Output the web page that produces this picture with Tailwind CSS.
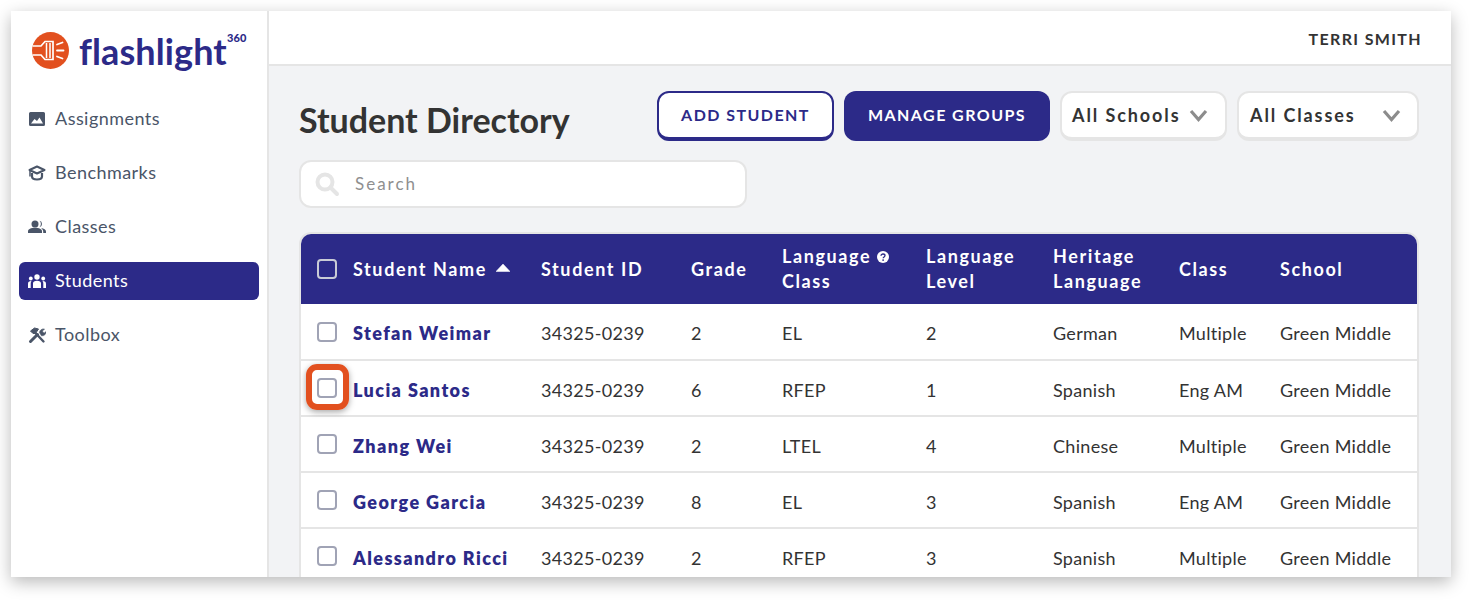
<!DOCTYPE html>
<html lang="en">
<head>
    <meta charset="UTF-8">
    <title>Student Directory</title>
    <script src="https://cdn.jsdelivr.net/npm/@tailwindcss/browser@4"></script>
</head>
<body class="bg-white font-['Lato','Noto_Sans',sans-serif] text-[#333333]">
<div class="p-[11px] h-[602px] overflow-hidden">
    <div class="flex w-[1440px] h-[566px] overflow-hidden bg-white shadow-[0_5px_16px_rgba(0,0,0,0.28)]">

        <!-- sidebar -->
        <aside class="w-[258px] shrink-0 border-r-2 border-[#e5e5e5] px-2">
            <div class="h-[89px] pl-[13px] pt-[21px] flex items-start">
                <svg class="w-[37px] h-[37px] shrink-0" viewBox="0 0 37 37">
                    <circle cx="18.5" cy="18.5" r="18.5" fill="#e2501f"/>
                    <path d="M0.5 14H9L13 9.500H21V27.500H13L9 23H0.5" fill="none" stroke="#fff" stroke-width="1.700"/>
                    <path d="M14.500 11V26M18 11V26" stroke="#fff" stroke-width="1.500"/>
                    <path d="M25 12.500L30.500 10.500M25 18.500H31.500M25 24.500L30.500 26.500" stroke="#fff" stroke-width="1.800" stroke-linecap="round"/>
                </svg>
                <div class="ml-[10px] -mt-[4px] text-[36px] leading-[46px] font-bold tracking-[0.1px] text-[#2c2a88] relative">
                    flashlight<sup class="absolute left-[148px] top-[4px] text-[11px] leading-[11px] font-black">360</sup>
                </div>
            </div>
            <nav class="flex flex-col gap-4 text-[18px] tracking-[0.45px] text-[#4a5568]">
                <a class="h-[38px] rounded-md pl-[9px] flex items-center gap-[9px]">
                    <svg class="w-[18px] h-[18px] shrink-0" viewBox="0 0 18 18"><path fill-rule="evenodd" fill="currentColor" d="M2.5 2h13A1.5 1.5 0 0 1 17 3.5v11a1.5 1.5 0 0 1-1.500 1.500h-13A1.500 1.500 0 0 1 1 14.500v-11A1.500 1.500 0 0 1 2.500 2ZM3 13.500h12L11.500 7.500 9 11 6.500 9Z"/></svg>
                    <span class="pb-[2px]">Assignments</span>
                </a>
                <a class="h-[38px] rounded-md pl-[9px] flex items-center gap-[9px]">
                    <svg class="w-[18px] h-[18px] shrink-0" viewBox="0 0 18 18"><path d="M9 2.500 16.500 6 9 9.500 1.500 6Z" fill="none" stroke="currentColor" stroke-width="2" stroke-linejoin="round"/><path d="M4 9v3.500C4 16.500 14 16.500 14 12.500V9" fill="none" stroke="currentColor" stroke-width="2.200"/><path d="M2 6.500v6" stroke="currentColor" stroke-width="1.500"/></svg>
                    <span class="pb-[2px]">Benchmarks</span>
                </a>
                <a class="h-[38px] rounded-md pl-[9px] flex items-center gap-[9px]">
                    <svg class="w-[18px] h-[18px] shrink-0" viewBox="0 0 18 18" fill="currentColor"><circle cx="7" cy="6" r="3.500"/><path d="M0 15v-1.500C0 11 3 9.800 7 9.800s7 1.200 7 3.700V15Z"/><path d="M11.500 2.800a3.300 3.300 0 0 1 0 6.400 4.800 4.800 0 0 0 0-6.400ZM13 9.900c3 .3 5 1.500 5 3.600V15h-2.800v-1.500c0-1.400-.8-2.600-2.200-3.600Z"/></svg>
                    <span class="pb-[2px]">Classes</span>
                </a>
                <a class="h-[38px] rounded-md pl-[9px] flex items-center gap-[9px] bg-[#2c2a88] text-white">
                    <svg class="w-[18px] h-[18px] shrink-0" viewBox="0 0 18 18" fill="currentColor"><circle cx="9" cy="5" r="2.700"/><circle cx="2.800" cy="6.500" r="1.900"/><circle cx="15.200" cy="6.500" r="1.900"/><path d="M5 16v-4.500C5 9.500 6.500 8.700 9 8.700s4 .8 4 2.800V16ZM0 16v-4c0-2 1-2.900 3.500-2.900-.6.700-.8 1.500-.8 2.400V16ZM18 16v-4c0-2-1-2.900-3.500-2.900.6.700.8 1.500.8 2.400V16Z"/></svg>
                    <span class="pb-[2px]">Students</span>
                </a>
                <a class="h-[38px] rounded-md pl-[9px] flex items-center gap-[9px]">
                    <svg class="w-[18px] h-[18px] shrink-0" viewBox="0 0 18 18" fill="none" stroke="currentColor"><path d="M2.500 15.500 9.500 8.500" stroke-width="3" stroke-linecap="round"/><path d="M15.500 15.500 7 6.500" stroke-width="2.400" stroke-linecap="round"/><path d="M2.500 5 6.500 2 10.500 3 7.500 7.500 5 7.500Z" fill="currentColor" stroke-width="1"/><path d="M11.500 6.500c.3-2.500 2.500-4 5-3.500l-2 2 .5 1.500 1.500.5 1.500-1.500c.3 2.500-1.500 4.500-4.500 4.300Z" fill="currentColor" stroke-width=".6"/></svg>
                    <span class="pb-[2px]">Toolbox</span>
                </a>
            </nav>
        </aside>

        <!-- main -->
        <main class="flex-1 min-w-0 flex flex-col bg-[#f2f3f5]">
            <header class="h-[55px] shrink-0 bg-white border-b-2 border-[#e5e5e5] flex items-center justify-end pr-[29px] pt-[3px] text-[16px] font-bold tracking-[1.35px] text-[#333333]">
                TERRI SMITH
            </header>

            <div class="pl-[30px] pr-[32px] pt-[25px]">
                <div class="flex items-start h-[50px]">
                    <h1 class="text-[34px] leading-[58px] h-[50px] font-bold text-[#333333]">Student Directory</h1>
                    <div class="ml-auto flex gap-[10px] h-[50px] text-[16px] font-bold tracking-[1.45px]">
                        <button class="w-[177px] rounded-xl border-2 border-b-4 border-[#2c2a88] bg-white text-[#2c2a88]">ADD STUDENT</button>
                        <button class="w-[206px] rounded-xl bg-[#2c2a88] text-white pb-[2px]">MANAGE GROUPS</button>
                        <div class="w-[167px] rounded-xl border-2 border-b-4 border-[#e5e5e5] bg-white pl-[10px] pr-[17px] flex items-center justify-between text-[18px] tracking-[1.9px] text-[#333333]">
                            All Schools
                            <svg class="w-[19px] h-[13px]" viewBox="0 0 19 13" fill="none"><path d="M2 2l7.500 8.500L17 2" stroke="#8c8c8c" stroke-width="3.200"/></svg>
                        </div>
                        <div class="w-[182px] rounded-xl border-2 border-b-4 border-[#e5e5e5] bg-white pl-[11px] pr-[16px] flex items-center justify-between text-[18px] tracking-[1.9px] text-[#333333]">
                            All Classes
                            <svg class="w-[19px] h-[13px]" viewBox="0 0 19 13" fill="none"><path d="M2 2l7.500 8.500L17 2" stroke="#8c8c8c" stroke-width="3.200"/></svg>
                        </div>
                    </div>
                </div>

                <div class="mt-[19px] w-[448px] h-[48px] rounded-xl border-2 border-[#e5e5e5] bg-white flex items-center pl-[14px]">
                    <svg class="w-[25px] h-[25px] shrink-0" viewBox="0 0 25 25" fill="none"><circle cx="10" cy="10" r="7.500" stroke="#e5e5e5" stroke-width="4"/><path d="M15.500 15.500 22 22" stroke="#e5e5e5" stroke-width="4" stroke-linecap="round"/></svg>
                    <span class="ml-[15px] text-[17px] tracking-[2px] text-[#8f8f8f]">Search</span>
                </div>

                <div class="mt-[24px] border-2 border-[#e5e5e5] rounded-t-xl bg-white">
                    <table class="table-fixed w-[1116px] border-collapse text-left text-[18px] tracking-[0.3px]">
                        <colgroup>
                            <col class="w-[52px]"><col class="w-[188px]"><col class="w-[150px]"><col class="w-[91px]"><col class="w-[144px]"><col class="w-[127px]"><col class="w-[126px]"><col class="w-[101px]"><col class="w-[137px]">
                        </colgroup>
                        <thead class="bg-[#2c2a88] text-white font-bold tracking-[1.6px] leading-[25px]">
                            <tr class="h-[70px]">
                                <th class="rounded-tl-[10px] pl-[16px]"><span class="block w-[20px] h-[20px] rounded border-2 border-[#c9cbd6]"></span></th>
                                <th class="font-bold"><span class="flex items-center gap-[9px]">Student Name <svg class="w-[14px] h-[8px] -mt-[3px]" viewBox="0 0 14 8"><path d="M7 0l7 7.500H0Z" fill="#fff" stroke="#fff" stroke-width=".5" stroke-linejoin="round"/></svg></span></th>
                                <th class="font-bold">Student ID</th>
                                <th class="font-bold">Grade</th>
                                <th class="font-bold">
                                    <span class="flex items-center gap-[6px]">Language
                                        <svg class="w-[12px] h-[12px]" viewBox="0 0 12 12"><circle cx="6" cy="6" r="6" fill="#fff"/><path d="M4 4.700C4 3.500 5 3 6 3s2 .6 2 1.600C8 6 6.200 5.900 6.200 7.200" fill="none" stroke="#2c2a88" stroke-width="1.300"/><circle cx="6.100" cy="9.100" r=".9" fill="#2c2a88"/></svg>
                                    </span>Class
                                </th>
                                <th class="font-bold">Language<br>Level</th>
                                <th class="font-bold">Heritage<br>Language</th>
                                <th class="font-bold">Class</th>
                                <th class="rounded-tr-[10px] font-bold">School</th>
                            </tr>
                        </thead>
                        <tbody class="[&_tr]:h-[56px] [&_tr]:border-b-2 [&_tr]:border-[#e5e5e5] [&_td+td]:pt-[4px]">
                            <tr>
                                <td class="pl-[16px]"><span class="block w-[20px] h-[20px] rounded border-2 border-[#a0a3b5]"></span></td>
                                <td class="font-extrabold tracking-[1.4px] text-[#2c2a88]">Stefan Weimar</td><td>34325-0239</td><td>2</td><td>EL</td><td>2</td><td>German</td><td>Multiple</td><td>Green Middle</td>
                            </tr>
                            <tr>
                                <td class="pl-[16px] relative">
                                    <span class="block w-[20px] h-[20px] rounded border-2 border-[#a0a3b5]"></span>
                                    <span class="absolute left-[5px] top-[3px] w-[43px] h-[46px] rounded-[11px] border-[6px] border-[#e2501f] shadow-[0_2px_6px_rgba(0,0,0,0.35)]"></span>
                                </td>
                                <td class="font-extrabold tracking-[1.4px] text-[#2c2a88]">Lucia Santos</td><td>34325-0239</td><td>6</td><td>RFEP</td><td>1</td><td>Spanish</td><td>Eng AM</td><td>Green Middle</td>
                            </tr>
                            <tr>
                                <td class="pl-[16px]"><span class="block w-[20px] h-[20px] rounded border-2 border-[#a0a3b5]"></span></td>
                                <td class="font-extrabold tracking-[1.4px] text-[#2c2a88]">Zhang Wei</td><td>34325-0239</td><td>2</td><td>LTEL</td><td>4</td><td>Chinese</td><td>Multiple</td><td>Green Middle</td>
                            </tr>
                            <tr>
                                <td class="pl-[16px]"><span class="block w-[20px] h-[20px] rounded border-2 border-[#a0a3b5]"></span></td>
                                <td class="font-extrabold tracking-[1.4px] text-[#2c2a88]">George Garcia</td><td>34325-0239</td><td>8</td><td>EL</td><td>3</td><td>Spanish</td><td>Eng AM</td><td>Green Middle</td>
                            </tr>
                            <tr>
                                <td class="pl-[16px]"><span class="block w-[20px] h-[20px] rounded border-2 border-[#a0a3b5]"></span></td>
                                <td class="font-extrabold tracking-[1.4px] text-[#2c2a88]">Alessandro Ricci</td><td>34325-0239</td><td>2</td><td>RFEP</td><td>3</td><td>Spanish</td><td>Multiple</td><td>Green Middle</td>
                            </tr>
                        </tbody>
                    </table>
                </div>
            </div>
        </main>
    </div>
</div>
</body>
</html>
